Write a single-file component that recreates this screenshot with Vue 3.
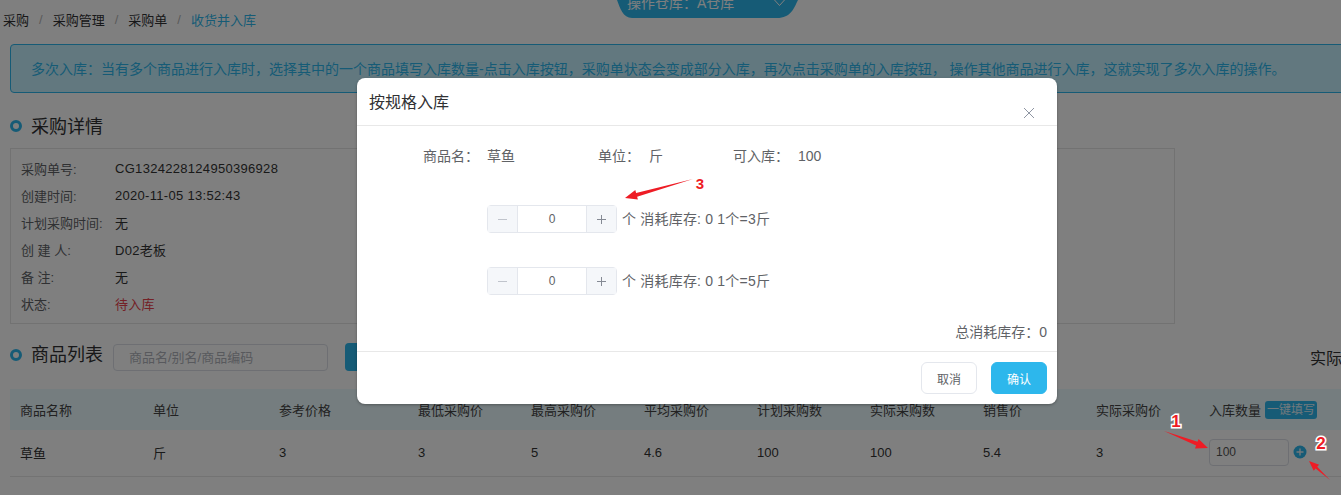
<template>
  <div class="page">
    <header class="crumbs">
      <span>采购</span><i>/</i><span>采购管理</span><i>/</i><span>采购单</span><i>/</i><span class="current">收货并入库</span>
      <div class="store">
        <span>操作仓库：A仓库</span>
        <svg viewBox="0 0 12 8" width="13" height="8" fill="none" stroke="#ffffff" stroke-width="1">
          <path d="M1 1l5 5.5L11 1" />
        </svg>
      </div>
    </header>

    <div class="alert">
      多次入库：当有多个商品进行入库时，选择其中的一个商品填写入库数量-点击入库按钮，采购单状态会变成部分入库，再次点击采购单的入库按钮， 操作其他商品进行入库，这就实现了多次入库的操作。
    </div>

    <h2 class="section-title first"><b class="ring"></b>采购详情</h2>
    <div class="detail">
      <div v-for="row in details" :key="row.label" class="detail-row">
        <span class="detail-label">{{ row.label }}</span>
        <span class="detail-value" :class="{ danger: row.danger }">{{ row.value }}</span>
      </div>
    </div>

    <div class="list-head">
      <h2 class="section-title lifted"><b class="ring"></b>商品列表</h2>
      <div class="search">商品名/别名/商品编码</div>
      <div class="search-btn"></div>
      <div class="actual">实际</div>
    </div>

    <div class="table">
      <div class="tr th">
        <span v-for="h in columns" :key="h">{{ h }}</span>
        <span class="fill-col">入库数量<em>一键填写</em></span>
      </div>
      <div class="tr td">
        <span v-for="(c, i) in cells" :key="i">{{ c }}</span>
        <span class="qty-col">
          <span class="qty">100</span>
          <svg viewBox="0 0 14 14" width="14" height="14">
            <circle cx="7" cy="7" r="6.5" fill="#2db7ec" />
            <path d="M3.5 7h7M7 3.5v7" stroke="#e6f0f5" stroke-width="1.4" />
          </svg>
        </span>
      </div>
    </div>

    <div class="mask">
      <div class="modal">
        <div class="modal-head">
          <span>按规格入库</span>
          <svg viewBox="0 0 12 12" width="12" height="12" fill="none" stroke="#8f96a3" stroke-width="1">
            <path d="M1 1l10 10M11 1L1 11" />
          </svg>
        </div>
        <div class="modal-body">
          <div class="info">
            <span class="info-name">商品名：</span><span class="info-fish">草鱼</span>
            <span class="info-unit">单位：</span><span class="info-jin">斤</span>
            <span class="info-can">可入库：</span><span>100</span>
          </div>
          <div v-for="spec in specs" :key="spec" class="spec">
            <div class="stepper">
              <span class="step minus">
                <svg viewBox="0 0 9 9" width="9" height="9" stroke="#c0c4cc"><path d="M0 4.5h9" /></svg>
              </span>
              <span class="step-val">0</span>
              <span class="step plus">
                <svg viewBox="0 0 9 9" width="9" height="9" stroke="#858a94"><path d="M0 4.5h9M4.5 0v9" /></svg>
              </span>
            </div>
            <span class="spec-text">个 消耗库存: 0 1个={{ spec }}斤</span>
          </div>
          <div class="total">总消耗库存：0</div>
        </div>
        <div class="modal-foot">
          <button class="btn">取消</button>
          <button class="btn primary">确认</button>
        </div>
      </div>
    </div>

    <svg class="marks" viewBox="0 0 1341 495" width="1341" height="495">
      <path d="M1164 431L1197.5 441.8L1198.6 439L1208 448L1195 448.4L1196.1 445.6Z" fill="#ee1c25" />
      <path d="M1330 480L1317.2 466.8L1319.1 464.7L1309 461L1313.7 470.7L1315.6 468.6Z" fill="#ee1c25" />
      <path d="M693 179L636.1 192.9L635.3 190L625 198L637.9 199.6L637.1 196.7Z" fill="#ee1c25" />
      <text x="1176" y="427" class="mark-num">1</text>
      <text x="1321" y="449" class="mark-num">2</text>
      <text x="700" y="189" class="mark-num small">3</text>
    </svg>
  </div>
</template>

<script setup>
const details = [
  { label: '采购单号:', value: 'CG1324228124950396928' },
  { label: '创建时间:', value: '2020-11-05 13:52:43' },
  { label: '计划采购时间:', value: '无' },
  { label: '创 建 人:', value: 'D02老板' },
  { label: '备 注:', value: '无' },
  { label: '状态:', value: '待入库', danger: true },
]

const columns = ['商品名称', '单位', '参考价格', '最低采购价', '最高采购价', '平均采购价', '计划采购数', '实际采购数', '销售价', '实际采购价']
const cells = ['草鱼', '斤', '3', '3', '5', '4.6', '100', '100', '5.4', '3']
const specs = [3, 5]
</script>

<style>
html, body { margin: 0; overflow: hidden; }
</style>

<style scoped>
.page {
  position: relative;
  width: 1341px;
  height: 495px;
  overflow: hidden;
  background: #fff;
  color: #303133;
  font-family: "Liberation Sans", "Noto Sans CJK SC", sans-serif;
  font-size: 13px;
}

.crumbs {
  position: relative;
  display: flex;
  align-items: center;
  height: 38px;
  padding-left: 3px;
  box-sizing: border-box;
  background: #fff;
}
.crumbs i {
  margin: 0 10px;
  color: #b5b5b5;
  font-style: normal;
}
.crumbs .current { color: #2db7ec; }

.store {
  position: absolute;
  left: 617px;
  top: 0;
  display: flex;
  justify-content: space-between;
  align-items: center;
  width: 181px;
  height: 18px;
  padding: 0 12px 6px 10px;
  box-sizing: border-box;
  background: #2db7ec;
  clip-path: path('M0 0H181C177 8 174 18 160 18H15C6 18 3 8 0 0Z');
  color: #fff;
  font-size: 14px;
}
.store span { margin-top: -8px; white-space: nowrap; }
.store svg { margin-top: -7px; }

.alert {
  margin: 6px 0 0 10px;
  width: 1340px;
  height: 49px;
  box-sizing: border-box;
  padding-left: 20px;
  line-height: 49px;
  white-space: nowrap;
  font-size: 14px;
  background: #c4f0ff;
  border: 1px solid #2db7ec;
  border-radius: 4px;
  color: #2db7ec;
}

.section-title {
  display: flex;
  align-items: center;
  margin: 0;
  font-size: 18px;
  font-weight: 400;
  color: #303133;
}
.section-title.first {
  margin: 20px 0 0 10px;
  height: 24px;
}
.section-title.lifted { margin-top: -8px; }
.ring {
  width: 12px;
  height: 12px;
  margin: 2px 9px 0 0;
  box-sizing: border-box;
  border: 3px solid #2db7ec;
  border-radius: 50%;
}
.lifted .ring { margin-top: 4px; }

.detail {
  width: 1165px;
  height: 176px;
  margin: 11px 0 0 10px;
  padding-top: 6px;
  box-sizing: border-box;
  border: 1px solid #e4e4e4;
}
.detail-row {
  display: flex;
  align-items: center;
  height: 27px;
  padding-left: 10px;
  color: #333;
}
.detail-label {
  width: 94px;
  color: #606266;
}
.detail-value { letter-spacing: 0.3px; }
.danger { color: #e8424c; }

.list-head {
  display: flex;
  align-items: center;
  height: 28px;
  margin: 19px 0 0 10px;
}
.search {
  width: 215px;
  height: 27px;
  margin-left: 10px;
  padding-left: 15px;
  box-sizing: border-box;
  line-height: 25px;
  border: 1px solid #dcdfe6;
  border-radius: 4px;
  color: #b0b3ba;
}
.search-btn {
  width: 80px;
  height: 28px;
  margin-left: 17px;
  background: #2db7ec;
  border-radius: 4px;
}
.actual {
  margin-left: auto;
  width: 31px;
  font-size: 16px;
  white-space: nowrap;
}

.table { margin: 18px 0 0 10px; }
.tr {
  display: grid;
  grid-template-columns: 133px 126px 139px 113px 113px 113px 113px 113px 113px 113px auto;
  align-items: center;
  padding-left: 10px;
}
.th {
  height: 41px;
  background: #ebfafe;
  color: #444;
}
.td {
  height: 44px;
  padding-bottom: 2px;
  border-bottom: 1px solid #e6e6e6;
  color: #333;
}
.fill-col {
  display: flex;
  align-items: center;
  white-space: nowrap;
}
.fill-col em {
  margin-left: 4px;
  padding: 0 2px;
  font-style: normal;
  font-size: 12px;
  line-height: 18px;
  background: #2db7ec;
  border-radius: 3px;
  color: #e0f2fa;
}
.qty-col {
  display: flex;
  align-items: center;
  gap: 4px;
}
.qty {
  width: 80px;
  height: 27px;
  box-sizing: border-box;
  padding-left: 6px;
  font-size: 12px;
  line-height: 25px;
  border: 1px solid #dcdfe6;
  border-radius: 4px;
  color: #555;
}

.mask {
  position: absolute;
  inset: 0;
  background: rgba(0, 0, 0, 0.5);
}
.modal {
  position: absolute;
  left: 357px;
  top: 78px;
  width: 700px;
  height: 326px;
  display: flex;
  flex-direction: column;
  background: #fff;
  border-radius: 8px;
  box-shadow: 0 1px 3px rgba(0, 0, 0, 0.3);
  color: #606266;
}
.modal-head {
  display: flex;
  justify-content: space-between;
  height: 48px;
  padding: 14px 22px 0 12px;
  box-sizing: border-box;
  border-bottom: 1px solid #e8e8e8;
  font-size: 16px;
  line-height: 21px;
  color: #303133;
}
.modal-head svg { margin-top: 15px; }
.modal-body {
  flex: 1;
  padding-top: 21px;
  box-sizing: border-box;
}
.info {
  display: flex;
  height: 18px;
  line-height: 18px;
  padding-left: 66px;
  font-size: 14px;
}
.info-name { width: 64px; }
.info-fish { width: 111px; }
.info-unit { width: 51px; }
.info-jin { width: 84px; }
.info-can { width: 65px; }

.spec {
  display: flex;
  align-items: center;
  gap: 5px;
  height: 28px;
  margin: 0 0 34px 130px;
  font-size: 14px;
}
.info + .spec { margin-top: 40px; }
.spec-text { margin-top: -2px; letter-spacing: 0.2px; }
.stepper {
  display: flex;
  width: 130px;
  height: 28px;
  box-sizing: border-box;
  border: 1px solid #e4e7ed;
  border-radius: 4px;
}
.step {
  display: flex;
  align-items: center;
  justify-content: center;
  width: 29px;
  background: #f5f7fa;
}
.step.minus { border-right: 1px solid #e4e7ed; }
.step.plus { border-left: 1px solid #e4e7ed; }
.step-val {
  flex: 1;
  line-height: 26px;
  text-align: center;
  font-size: 12px;
}
.total {
  margin-top: -7px;
  padding-right: 10px;
  text-align: right;
  font-size: 14px;
  line-height: 20px;
}

.modal-foot {
  display: flex;
  justify-content: flex-end;
  gap: 14px;
  height: 53px;
  padding: 10px 10px 0 0;
  box-sizing: border-box;
  border-top: 1px solid #e8e8e8;
}
.btn {
  width: 56px;
  height: 32px;
  padding: 0;
  font: inherit;
  font-size: 12px;
  background: #fff;
  border: 1px solid #e4e7ed;
  border-radius: 6px;
  color: #606266;
}
.btn.primary {
  background: #2db7ec;
  border-color: #2db7ec;
  color: #fff;
}

.marks {
  position: absolute;
  left: 0;
  top: 0;
  pointer-events: none;
}
.mark-num {
  font-family: "Liberation Sans", sans-serif;
  font-size: 17px;
  font-weight: 700;
  text-anchor: middle;
  fill: #ee1c25;
  stroke: #fff;
  stroke-width: 3px;
  paint-order: stroke;
}
.mark-num.small { font-size: 15px; }
</style>
